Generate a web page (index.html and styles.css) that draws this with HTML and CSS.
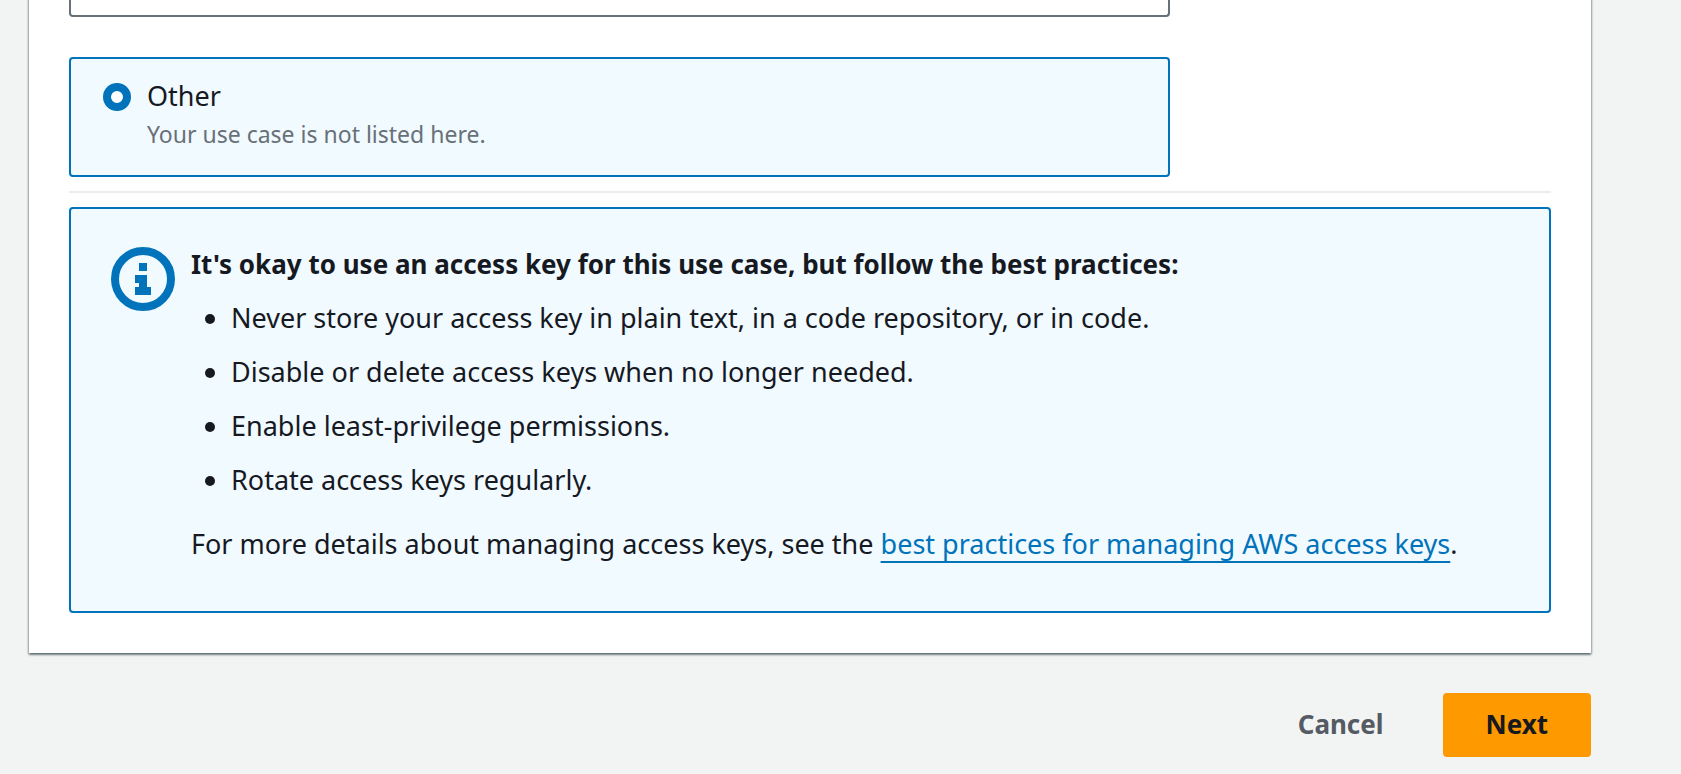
FILE: index.html
```html
<!DOCTYPE html>
<html lang="en">
<head>
<meta charset="utf-8">
<meta name="viewport" content="width=device-width, initial-scale=1">
<title>Access key best practices</title>
<link rel="stylesheet" href="styles.css">
</head>
<body>
<form class="page">
  <section class="panel">
    <div class="tile tile-previous"></div>
    <label class="tile tile-selected">
      <input class="tile-radio" type="radio" name="use-case" aria-describedby="other-description" checked>
      <span class="tile-text">
        <span class="tile-title">Other</span>
        <span class="tile-description" id="other-description">Your use case is not listed here.</span>
      </span>
    </label>
    <hr class="divider">
    <div class="alert">
      <svg class="alert-icon" viewBox="0 0 64 64" aria-hidden="true">
        <circle cx="32" cy="32" r="28" fill="none" stroke="currentColor" stroke-width="8"/>
        <path d="M28 16h8v8h-8zM24 28h12v12h4v8H24v-8h4v-4h-4z" fill="currentColor"/>
      </svg>
      <div class="alert-content">
        <h2 class="alert-title">It's okay to use an access key for this use case, but follow the best practices:</h2>
        <ul class="alert-list">
          <li>Never store your access key in plain text, in a code repository, or in code.</li>
          <li>Disable or delete access keys when no longer needed.</li>
          <li>Enable least-privilege permissions.</li>
          <li>Rotate access keys regularly.</li>
        </ul>
        <p class="alert-more">For more details about managing access keys, see the <a class="link" href="#">best practices for managing AWS access keys</a>.</p>
      </div>
    </div>
  </section>
  <div class="actions">
    <button class="button button-link" type="button">Cancel</button>
    <button class="button button-primary" type="submit">Next</button>
  </div>
</form>
</body>
</html>
```
FILE: styles.css
```css
* {
  box-sizing: border-box;
}

body {
  margin: 0;
  background: #f2f3f3;
  color: #16191f;
  font-family: "Noto Sans", "Open Sans", sans-serif;
  font-size: 27px;
  line-height: 44px;
}

.page {
  padding: 0 90px 17px 29px;
}

.panel {
  margin-top: -8px;
  padding: 8px 40px 40px;
  background: #fff;
  box-shadow: 0 2px 2px rgba(0, 28, 36, 0.4), 1px 1px 2px rgba(0, 28, 36, 0.25), -1px 1px 2px rgba(0, 28, 36, 0.25);
}

.tile {
  max-width: 1101px;
  border: 2px solid #687078;
  border-radius: 4px;
}

.tile-previous {
  height: 17px;
  border-top: 0;
  border-radius: 0 0 4px 4px;
}

.tile-selected {
  display: flex;
  gap: 16px;
  margin-top: 40px;
  padding: 17px 32px 23px;
  border-color: #0073bb;
  background: #f1faff;
}

.tile-radio {
  flex: none;
  appearance: none;
  width: 28px;
  height: 28px;
  margin: 7px 0 0;
  border: 8px solid #0073bb;
  border-radius: 50%;
  background: #fff;
}

.tile-title,
.tile-description {
  display: block;
}

.tile-title {
  line-height: 40px;
}

.tile-description {
  color: #687078;
  font-size: 23px;
  line-height: 36px;
}

.divider {
  height: 2px;
  margin: 14px 0;
  border: 0;
  background: #eaeded;
}

.alert {
  display: flex;
  gap: 16px;
  padding: 33px 40px 45px;
  border: 2px solid #0073bb;
  border-radius: 4px;
  background: #f1faff;
}

.alert-icon {
  flex: none;
  width: 64px;
  height: 64px;
  margin-top: 5px;
  color: #0073bb;
}

.alert-title {
  margin: 0;
  font-size: 26px;
}

.alert-list {
  display: grid;
  gap: 10px;
  margin: 10px 0 20px;
  padding-left: 40px;
}

.alert-more {
  margin: 0;
}

.link {
  text-decoration: underline;
  text-decoration-thickness: 2px;
  text-decoration-skip-ink: none;
  text-underline-offset: 7px;
  color: #0073bb;
}

.actions {
  display: flex;
  justify-content: flex-end;
  gap: 16px;
  margin-top: 40px;
}

.button {
  padding: 7px 41px 9px;
  border: 2px solid transparent;
  border-radius: 4px;
  font: inherit;
  font-size: 26px;
  font-weight: 700;
}

.button-link {
  background: transparent;
  color: #545b64;
}

.button-primary {
  border-color: #ff9900;
  background: #ff9900;
  color: #16191f;
}
```
